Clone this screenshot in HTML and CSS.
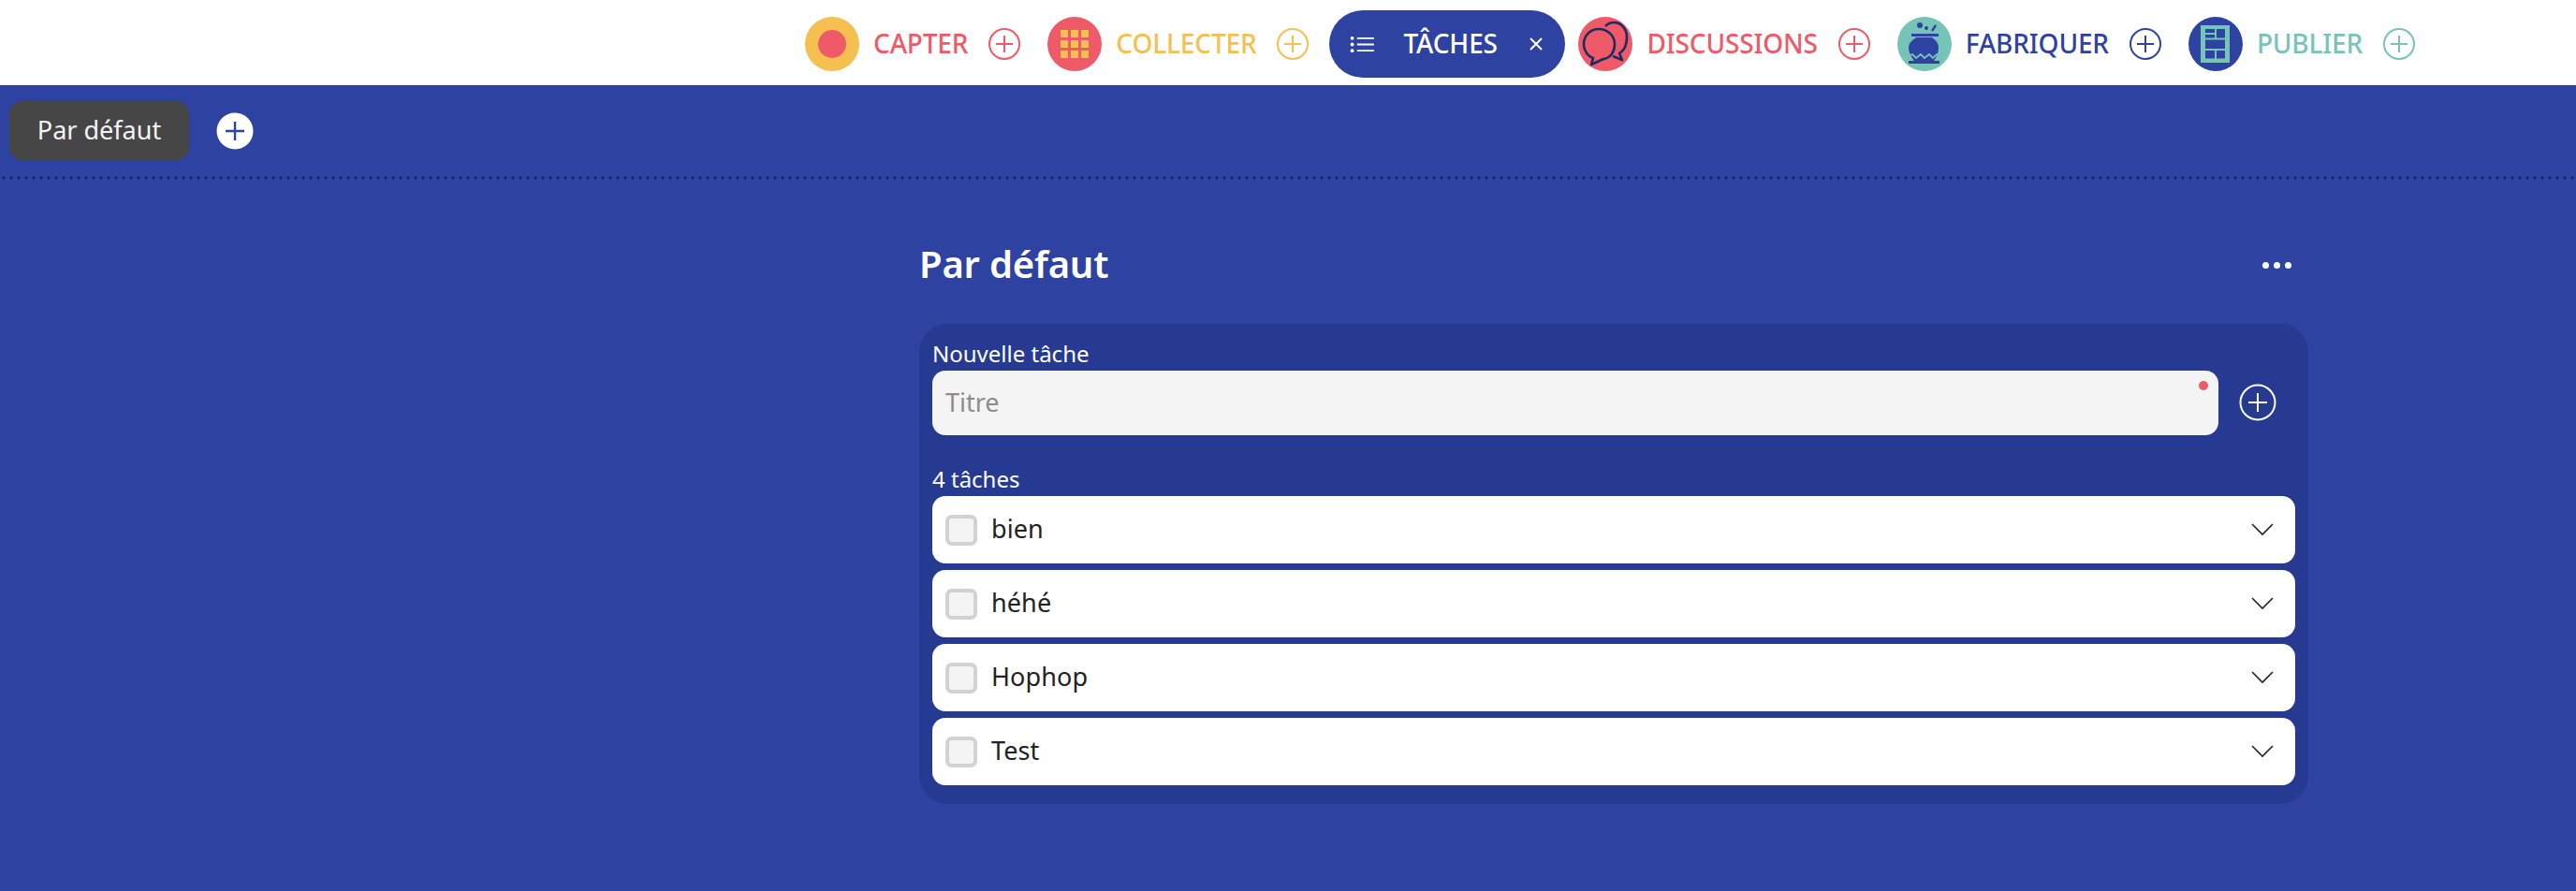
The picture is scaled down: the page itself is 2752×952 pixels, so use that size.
FILE: index.html
```html
<!DOCTYPE html>
<html lang="fr">
<head>
  <meta charset="UTF-8" />
  <meta name="viewport" content="width=device-width, initial-scale=1.0"/>
  <title>Tâches</title>
  <link rel="stylesheet" href="styles.css">
</head>
<body>
  <header class="topbar">
    <div class="step step-capter">
      <svg class="step-icon" viewBox="0 0 58 58"><circle cx="29" cy="29" r="29" fill="#f5c050"/><circle cx="29" cy="29" r="15" fill="#ee5a67"/></svg>
      <span class="step-name">CAPTER</span>
      <svg class="step-add" viewBox="0 0 34 34"><circle cx="17" cy="17" r="16" /><path d="M17 8v18M8 17h18"/></svg>
    </div>
    <div class="step step-collecter">
      <svg class="step-icon" viewBox="0 0 58 58">
        <circle cx="29" cy="29" r="29" fill="#ee5a67"/>
        <g fill="#f5c050">
          <rect x="14" y="14" width="8" height="8"/><rect x="25" y="14" width="8" height="8"/><rect x="36" y="14" width="8" height="8"/>
          <rect x="14" y="25" width="8" height="8"/><rect x="25" y="25" width="8" height="8"/><rect x="36" y="25" width="8" height="8"/>
          <rect x="14" y="36" width="8" height="8"/><rect x="25" y="36" width="8" height="8"/><rect x="36" y="36" width="8" height="8"/>
        </g>
      </svg>
      <span class="step-name">COLLECTER</span>
      <svg class="step-add" viewBox="0 0 34 34"><circle cx="17" cy="17" r="16" /><path d="M17 8v18M8 17h18"/></svg>
    </div>
    <div class="step-active">
      <svg class="list-icon" viewBox="0 0 28 20"><path d="M8 3h19M8 10h19M8 17h19"/><circle cx="2.5" cy="3" r="2"/><circle cx="2.5" cy="10" r="2"/><circle cx="2.5" cy="17" r="2"/></svg>
      <span class="step-name">TÂCHES</span>
      <svg class="close-icon" viewBox="0 0 16 16"><path d="M2 2l12 12M14 2L2 14"/></svg>
    </div>
    <div class="step step-discussions">
      <svg class="step-icon" viewBox="0 0 58 58">
        <circle cx="29" cy="29" r="29" fill="#ee5a67"/>
        <g fill="none" stroke="#1c2a66" stroke-width="2.6" stroke-linejoin="round">
          <path d="M29 10c3-3 6-4 9-4 9 0 14 8 14 16 0 8-3 14-8 17l3 7-10-4"/>
          <path d="M22 13c-9 0-16 7-16 16 0 7 4 13 10 15l-2 7 13-6c8-1 12-8 12-16 0-9-8-16-17-16z"/>
        </g>
      </svg>
      <span class="step-name">DISCUSSIONS</span>
      <svg class="step-add" viewBox="0 0 34 34"><circle cx="17" cy="17" r="16" /><path d="M17 8v18M8 17h18"/></svg>
    </div>
    <div class="step step-fabriquer">
      <svg class="step-icon" viewBox="0 0 58 58">
        <circle cx="29" cy="29" r="29" fill="#76c4b8"/>
        <g fill="#2e42a2">
          <circle cx="24" cy="9" r="3"/><circle cx="31" cy="12" r="2"/>
          <path d="M41 9l-4 6" stroke="#2e42a2" stroke-width="2.4"/>
          <rect x="15" y="18" width="29" height="3"/>
          <path d="M20 22h17c4 3 7 6 7 11 0 5-2 10-5 14H18c-3-4-6-9-6-14 0-5 4-8 8-11z"/>
          <rect x="12" y="47" width="33" height="3"/>
        </g>
        <path class="pot-wave" d="M11 42l5-2 4 4 5-4 4 4 5-4 4 4 4-4 5 2"/>
      </svg>
      <span class="step-name">FABRIQUER</span>
      <svg class="step-add" viewBox="0 0 34 34"><circle cx="17" cy="17" r="16" /><path d="M17 8v18M8 17h18"/></svg>
    </div>
    <div class="step step-publier">
      <svg class="step-icon" viewBox="0 0 58 58">
        <circle cx="29" cy="29" r="29" fill="#2e42a2"/>
        <rect x="13" y="9" width="31" height="40" fill="#76c4b8"/>
        <g fill="#2e42a2">
          <rect x="18" y="13" width="10" height="4"/><rect x="18" y="19" width="10" height="3.5"/>
          <rect x="30" y="13" width="9" height="9.5"/><rect x="18" y="24.5" width="21" height="9.5"/>
          <rect x="18" y="36" width="10" height="8.5"/><rect x="30" y="36" width="9" height="8.5"/>
        </g>
      </svg>
      <span class="step-name">PUBLIER</span>
      <svg class="step-add" viewBox="0 0 34 34"><circle cx="17" cy="17" r="16" /><path d="M17 8v18M8 17h18"/></svg>
    </div>
  </header>

  <nav class="tabs">
    <div class="tab">Par défaut</div>
    <div class="tab-add">
      <svg viewBox="0 0 40 40"><circle cx="20" cy="20" r="19.5" fill="#fff"/><path d="M20 10v20M10 20h20" stroke="#2e42a2" stroke-width="2.4"/></svg>
    </div>
  </nav>

  <main class="board">
    <div class="board-head">
      <h1>Par défaut</h1>
      <div class="more"><span></span><span></span><span></span></div>
    </div>
    <section class="panel">
      <label class="panel-label" for="titre">Nouvelle tâche</label>
      <div class="new-task">
        <div class="input-wrap">
          <input id="titre" type="text" placeholder="Titre" />
          <span class="required"></span>
        </div>
        <svg class="new-add" viewBox="0 0 40 40"><circle cx="20" cy="20" r="18.500"/><path d="M20 10v20M10 20h20"/></svg>
      </div>
      <div class="panel-label count">4 tâches</div>
      <ul class="tasks">
        <li class="task"><span class="check"></span><span class="task-name">bien</span><svg class="chevron" viewBox="0 0 24 14"><path d="M1 1l11 11L23 1"/></svg></li>
        <li class="task"><span class="check"></span><span class="task-name">héhé</span><svg class="chevron" viewBox="0 0 24 14"><path d="M1 1l11 11L23 1"/></svg></li>
        <li class="task"><span class="check"></span><span class="task-name">Hophop</span><svg class="chevron" viewBox="0 0 24 14"><path d="M1 1l11 11L23 1"/></svg></li>
        <li class="task"><span class="check"></span><span class="task-name">Test</span><svg class="chevron" viewBox="0 0 24 14"><path d="M1 1l11 11L23 1"/></svg></li>
      </ul>
    </section>
  </main>
</body>
</html>
```

FILE: styles.css
```css
* {
  box-sizing: border-box;
}

body {
  margin: 0;
  height: 952px;
  overflow: hidden;
  font-family: "Noto Sans", sans-serif;
  background: #2e42a2;
}

.topbar {
  height: 91px;
  padding-top: 3px;
  padding-left: 860px;
  background: #fff;
  display: flex;
  align-items: center;
}

.step {
  display: flex;
  align-items: center;
  margin-right: 29px;
  --step-color: #ee5a67;
  color: var(--step-color);
}

.step-icon {
  width: 58px;
  height: 58px;
  margin-right: 15px;
  flex: none;
}

.pot-wave {
  fill: none;
  stroke: #76c4b8;
  stroke-width: 1.8;
}

.step-name {
  font-size: 28px;
  font-weight: 500;
  letter-spacing: -0.15px;
  white-space: nowrap;
  padding-bottom: 2px;
}

.step-add {
  width: 34px;
  height: 34px;
  margin-left: 22px;
  flex: none;
  fill: none;
  stroke: var(--step-color);
  stroke-width: 2;
}

.step-collecter { --step-color: #f5c050; margin-right: 22px; }
.step-discussions { --step-color: #ee5a67; }
.step-fabriquer { --step-color: #2e42a2; }
.step-publier { --step-color: #76c4b8; margin-right: 0; }

.step-active {
  width: 252px;
  height: 72px;
  margin-right: 14px;
  border-radius: 36px;
  background: #2e42a2;
  color: #fff;
  display: flex;
  align-items: center;
  padding-left: 22px;
}

.list-icon {
  width: 27px;
  height: 19px;
  margin-right: 30px;
  stroke: #fff;
  stroke-width: 2;
  fill: #fff;
}

.list-icon circle { stroke: none; }

.close-icon {
  width: 16px;
  height: 16px;
  margin-left: auto;
  margin-right: 23px;
  stroke: #fff;
  stroke-width: 2;
}

.tabs {
  height: 101px;
  display: flex;
  align-items: center;
  padding-left: 10px;
  padding-bottom: 4px;
  background-image: radial-gradient(circle at 4px 2px, #1a2766 1.4px, transparent 2px);
  background-size: 8px 4px;
  background-repeat: repeat-x;
  background-position: 0 bottom;
}

.tab {
  width: 192px;
  height: 63px;
  padding-bottom: 2px;
  border-radius: 14px;
  background: #464646;
  color: #f4f4f4;
  font-size: 27px;
  display: flex;
  align-items: center;
  justify-content: center;
}

.tab-add {
  margin-left: 29px;
  display: flex;
}

.tab-add svg {
  width: 40px;
  height: 40px;
}

.board {
  width: 1484px;
  margin-left: 982px;
}

.board-head {
  height: 154px;
  padding-top: 60px;
  display: flex;
  justify-content: space-between;
}

h1 {
  margin: 0;
  font-size: 40px;
  font-weight: 600;
  letter-spacing: -0.2px;
  line-height: 60px;
  color: #fff;
}

.more {
  display: flex;
  gap: 5px;
  margin-top: 28px;
  margin-right: 18px;
}

.more span {
  width: 7px;
  height: 7px;
  border-radius: 50%;
  background: #fff;
}

.panel {
  height: 513px;
  padding: 16px 14px;
  border-radius: 30px;
  background: #273a92;
}

.panel-label {
  display: block;
  height: 34px;
  font-size: 24px;
  line-height: 32px;
  color: #fff;
}

.new-task {
  display: flex;
  align-items: center;
  gap: 22px;
}

.input-wrap {
  position: relative;
  width: 1374px;
}

.input-wrap input {
  display: block;
  width: 100%;
  height: 69px;
  padding: 0 14px 2px;
  border: none;
  border-radius: 14px;
  background: #f4f4f4;
  font-family: inherit;
  font-size: 27px;
  color: #222;
}

.input-wrap input::placeholder {
  color: #8c8c8c;
  opacity: 1;
}

.required {
  position: absolute;
  top: 11px;
  right: 11px;
  width: 10px;
  height: 10px;
  border-radius: 50%;
  background: #ee5a67;
}

.new-add {
  width: 40px;
  height: 40px;
  margin-top: -1px;
  fill: none;
  stroke: #fff;
  stroke-width: 2;
}

.count {
  margin-top: 31px;
}

.tasks {
  list-style: none;
  margin: 0;
  padding: 0;
  display: flex;
  flex-direction: column;
  gap: 7px;
}

.task {
  height: 72px;
  padding: 0 22px 0 14px;
  border-radius: 14px;
  background: #fff;
  display: flex;
  align-items: center;
  gap: 15px;
  color: #222;
  font-size: 27px;
  letter-spacing: 0.1px;
}

.task-name {
  padding-bottom: 3px;
}

.check {
  width: 34px;
  height: 33px;
  border: 4px solid #d2d2d2;
  border-radius: 7px;
  background: #f4f4f4;
}

.chevron {
  width: 24px;
  height: 14px;
  margin-left: auto;
  margin-right: 1px;
  fill: none;
  stroke: #222;
  stroke-width: 1.6;
}
```
